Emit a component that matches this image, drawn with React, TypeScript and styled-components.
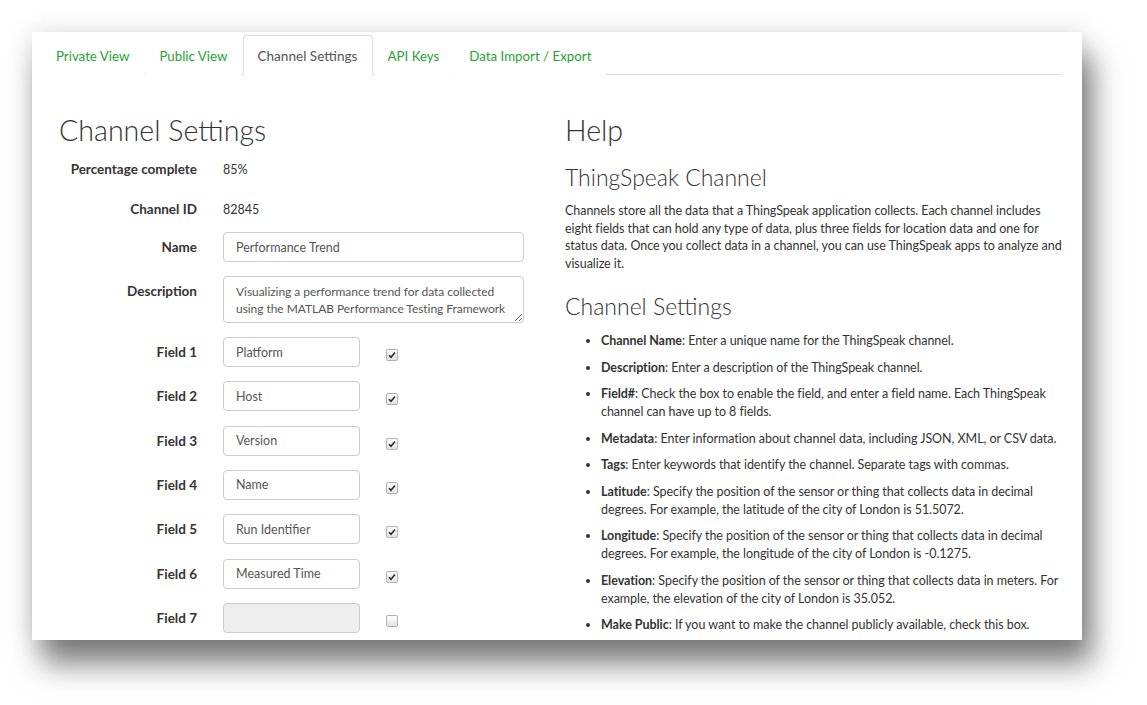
import React from 'react';
import styled, { createGlobalStyle } from 'styled-components';

const GlobalStyle = createGlobalStyle`
	html, body {
		margin: 0;
		padding: 0;
		background: #ffffff;
	}

	body {
		color: #333333;
		font-family: Lato, 'Liberation Sans', sans-serif;
	}

	* {
		box-sizing: border-box;
	}
`;

const PageUI = styled.div`
	width: 1147px;
	height: 705px;
	padding: 32px 0 0 32px;
	overflow: hidden;
`;

const CardUI = styled.div`
	width: 1050px;
	height: 608px;
	padding: 3px 20px 0 10px;
	overflow: hidden;
	background: #ffffff;
	box-shadow: 10px 24px 28px rgba(0, 0, 0, 0.5), 0 0 24px rgba(0, 0, 0, 0.12);
`;

const TabBarUI = styled.ul`
	display: flex;
	height: 40px;
	margin: 0;
	padding: 0;
	list-style: none;
	border-bottom: 1px solid #dddddd;
`;

const TabUI = styled.li<{ $active?: boolean }>`
	height: 40px;
	margin-right: 1px;
	padding: 0 14px 0 13px;
	color: ${(p) => (p.$active ? '#555555' : '#1ea42f')};
	font-size: ${(p) => (p.$active ? '13.6px' : '13.3px')};
	line-height: 40px;
	background: #ffffff;
	border: 1px solid ${(p) => (p.$active ? '#dddddd' : 'transparent')};
	border-bottom: none;
	border-radius: 4px 4px 0 0;
`;

const ColumnsUI = styled.div`
	display: grid;
	grid-template-columns: 506px 1fr;
	margin-right: -4px;
	padding-left: 17px;
`;

const TitleUI = styled.h2`
	margin: 39px 0 10px;
	color: #333333;
	font-size: 28.6px;
	font-weight: 300;
	line-height: 32px;
`;

const SubTitleUI = styled.h3<{ $gap: number; $after?: number }>`
	margin: ${(p) => p.$gap}px 0 ${(p) => p.$after ?? 12}px;
	color: #333333;
	font-size: 23px;
	font-weight: 300;
	line-height: 26px;
`;

const FormUI = styled.div`
	display: flex;
	flex-direction: column;
	gap: 14px;
`;

const RowUI = styled.div<{ $pull?: boolean }>`
	display: grid;
	grid-template-columns: 138px 301px;
	column-gap: 26px;
	align-items: center;
	min-height: 26px;
	margin-bottom: ${(p) => (p.$pull ? '-4px' : '0')};
`;

const FieldRowUI = styled.div`
	display: grid;
	grid-template-columns: 138px 137px 12px;
	column-gap: 26px;
	align-items: center;
	height: 30px;
	margin-bottom: 0.33px;
`;

const LabelUI = styled.label<{ $top?: boolean }>`
	align-self: ${(p) => (p.$top ? 'start' : 'center')};
	padding-top: ${(p) => (p.$top ? '7px' : '0')};
	color: #333333;
	font-size: 13.5px;
	font-weight: 700;
	text-align: right;
`;

const ValueUI = styled.span`
	color: #333333;
	font-size: 12.5px;
`;

const InputUI = styled.input`
	width: 100%;
	height: 30px;
	padding: 0 12px;
	color: #555555;
	font-family: inherit;
	font-size: 12.5px;
	background: #ffffff;
	border: 1px solid #cccccc;
	border-radius: 4px;
	outline: none;

	&:disabled {
		background: #eeeeee;
	}
`;

const TextAreaUI = styled.textarea`
	width: 100%;
	height: 47px;
	padding: 6px 12px;
	color: #555555;
	font-family: inherit;
	font-size: 12px;
	line-height: 17px;
	letter-spacing: -0.05px;
	border: 1px solid #cccccc;
	border-radius: 4px;
	outline: none;
	overflow: hidden;
`;

const CheckUI = styled.span`
	display: flex;
	align-items: center;
	justify-content: center;
	width: 12px;
	height: 12px;
	margin-top: 6px;
	background: linear-gradient(#fdfdfd, #e4e4e4);
	border: 1px solid #b2b2b2;
	border-radius: 2px;
`;

const HelpTextUI = styled.p`
	margin: 0;
	color: #333333;
	font-size: 12.5px;
	line-height: 17.5px;
	letter-spacing: -0.05px;
`;

const ListUI = styled.ul`
	margin: 0;
	padding-left: 36px;
	color: #333333;
	font-size: 12.5px;
	line-height: 18px;
	letter-spacing: -0.05px;

	li {
		margin-bottom: 8.5px;
	}

	b {
		font-weight: 700;
	}
`;

const tabs = ['Private View', 'Public View', 'Channel Settings', 'API Keys', 'Data Import / Export'];

const fields: { label: string; value: string }[] = [
	{ label: 'Field 1', value: 'Platform' },
	{ label: 'Field 2', value: 'Host' },
	{ label: 'Field 3', value: 'Version' },
	{ label: 'Field 4', value: 'Name' },
	{ label: 'Field 5', value: 'Run Identifier' },
	{ label: 'Field 6', value: 'Measured Time' },
	{ label: 'Field 7', value: '' },
];

const helpItems: [string, string][] = [
	['Channel Name', 'Enter a unique name for the ThingSpeak channel.'],
	['Description', 'Enter a description of the ThingSpeak channel.'],
	['Field#', 'Check the box to enable the field, and enter a field name. Each ThingSpeak channel can have up to 8 fields.'],
	['Metadata', 'Enter information about channel data, including JSON, XML, or CSV data.'],
	['Tags', 'Enter keywords that identify the channel. Separate tags with commas.'],
	['Latitude', 'Specify the position of the sensor or thing that collects data in decimal degrees. For example, the latitude of the city of London is 51.5072.'],
	['Longitude', 'Specify the position of the sensor or thing that collects data in decimal degrees. For example, the longitude of the city of London is -0.1275.'],
	['Elevation', 'Specify the position of the sensor or thing that collects data in meters. For example, the elevation of the city of London is 35.052.'],
	['Make Public', 'If you want to make the channel publicly available, check this box.'],
];

const CheckMark = () => (
	<svg width='8' height='8' viewBox='0 0 8 8'>
		<path d='M1 4.2 L3 6.3 L7 1.4' fill='none' stroke='#2b2b2b' strokeWidth='1.6' />
	</svg>
);

const renderFieldsJSX = () =>
	fields.map(({ label, value }) => (
		<FieldRowUI key={label}>
			<LabelUI>{label}</LabelUI>
			<InputUI value={value} readOnly disabled={!value} />
			<CheckUI>{value ? <CheckMark /> : null}</CheckUI>
		</FieldRowUI>
	));

const App = () => (
	<PageUI>
		<GlobalStyle />
		<CardUI>
			<TabBarUI>
				{tabs.map((t) => (
					<TabUI key={t} $active={t === 'Channel Settings'}>
						{t}
					</TabUI>
				))}
			</TabBarUI>
			<ColumnsUI>
				<div>
					<TitleUI>Channel Settings</TitleUI>
					<FormUI>
						<RowUI>
							<LabelUI>Percentage complete</LabelUI>
							<ValueUI>85%</ValueUI>
						</RowUI>
						<RowUI $pull>
							<LabelUI>Channel ID</LabelUI>
							<ValueUI>82845</ValueUI>
						</RowUI>
						<RowUI>
							<LabelUI>Name</LabelUI>
							<InputUI value='Performance Trend' readOnly />
						</RowUI>
						<RowUI>
							<LabelUI $top>Description</LabelUI>
							<TextAreaUI
								readOnly
								value='Visualizing a performance trend for data collected using the MATLAB Performance Testing Framework'
							/>
						</RowUI>
						{renderFieldsJSX()}
					</FormUI>
				</div>
				<div>
					<TitleUI>Help</TitleUI>
					<SubTitleUI $gap={18}>ThingSpeak Channel</SubTitleUI>
					<HelpTextUI>
						Channels store all the data that a ThingSpeak application collects. Each channel includes eight fields
						that can hold any type of data, plus three fields for location data and one for status data. Once you
						collect data in a channel, you can use ThingSpeak apps to analyze and visualize it.
					</HelpTextUI>
					<SubTitleUI $gap={21} $after={13}>
						Channel Settings
					</SubTitleUI>
					<ListUI>
						{helpItems.map(([k, v]) => (
							<li key={k}>
								<b>{k}</b>: {v}
							</li>
						))}
					</ListUI>
				</div>
			</ColumnsUI>
		</CardUI>
	</PageUI>
);

export default App;
